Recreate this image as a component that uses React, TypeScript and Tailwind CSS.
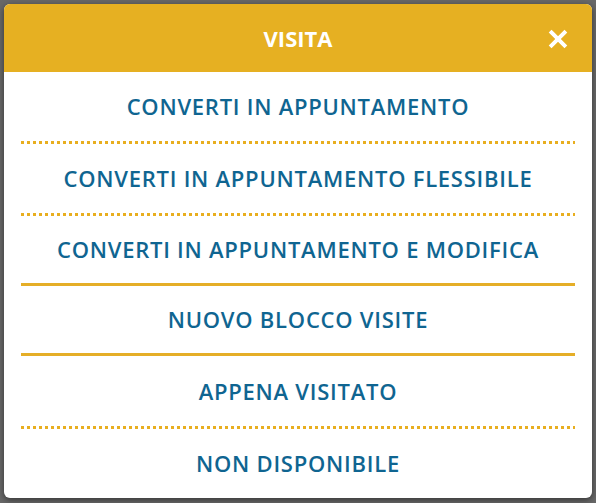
import { X } from "lucide-react";

type Item = { label: string; h: string; sep?: "dotted" | "solid" };

const items: Item[] = [
  { label: "CONVERTI IN APPUNTAMENTO", h: "h-[69px]", sep: "dotted" },
  { label: "CONVERTI IN APPUNTAMENTO FLESSIBILE", h: "h-[69px]", sep: "dotted" },
  { label: "CONVERTI IN APPUNTAMENTO E MODIFICA", h: "h-[67px]", sep: "solid" },
  { label: "NUOVO BLOCCO VISITE", h: "h-[67px]", sep: "solid" },
  { label: "APPENA VISITATO", h: "h-[70px]", sep: "dotted" },
  { label: "NON DISPONIBILE", h: "h-[69px]" },
];

function Separator({ kind }: { kind: "dotted" | "solid" }) {
  if (kind === "solid") {
    return <div className="mx-[17px] h-[3px] bg-[#e5ae27]" />;
  }
  return (
    <div className="mx-[17px] h-[3px] bg-[linear-gradient(to_right,#e8ae1f_3px,transparent_3px)] bg-[length:6px_3px] bg-repeat-x" />
  );
}

export default function App() {
  return (
    <div className="h-[503px] w-[596px] bg-[#686868] pt-1 pl-1 font-['Open_Sans',sans-serif]">
      <div className="w-[588px] overflow-hidden rounded-[6px] bg-white shadow-[0_2px_6px_rgba(0,0,0,0.5)]">
        <div className="relative flex h-[68px] items-center justify-center bg-[#e6b022]">
          <h2 className="text-[22px] font-bold text-white">VISITA</h2>
          <button className="absolute right-[21px] top-[22px] text-white">
            <X size={26} strokeWidth={3.6} strokeLinecap="square" />
          </button>
        </div>
        {items.map((it) => (
          <div key={it.label}>
            <div
              className={`${it.h} flex items-center justify-center text-[22px] font-semibold tracking-[0.75px] text-[#0f6591]`}
            >
              {it.label}
            </div>
            {it.sep && <Separator kind={it.sep} />}
          </div>
        ))}
      </div>
    </div>
  );
}
